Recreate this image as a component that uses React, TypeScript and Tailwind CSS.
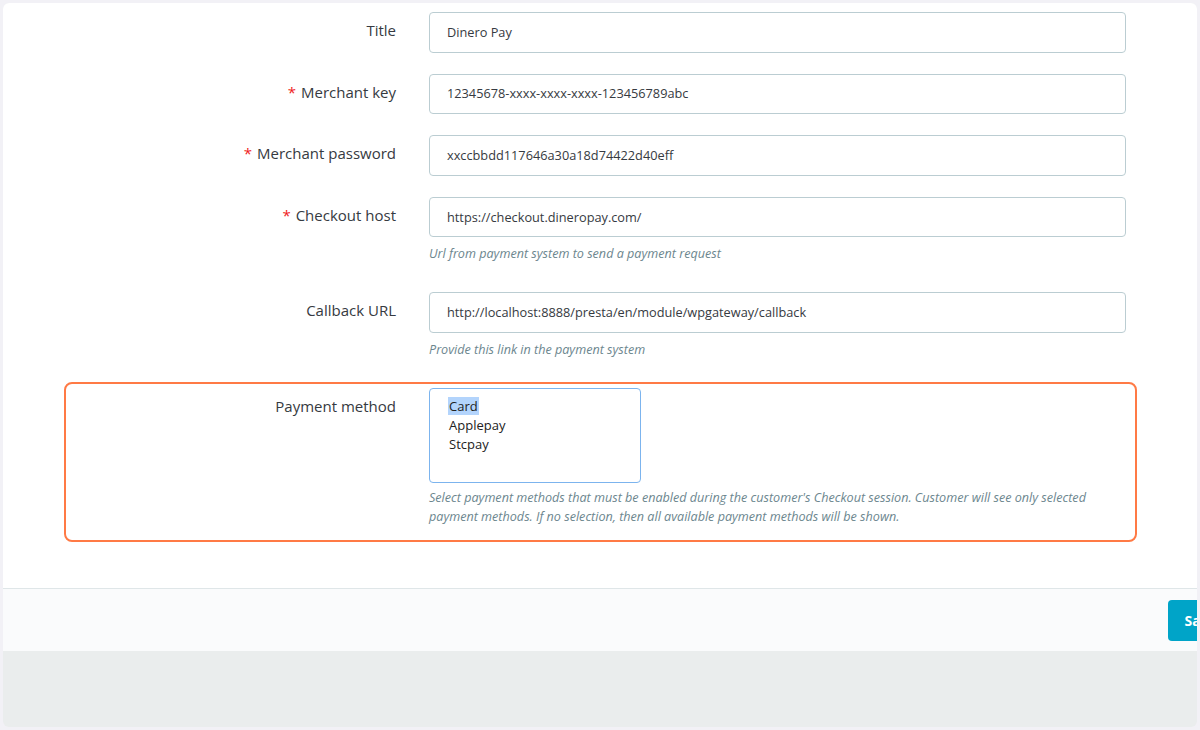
import React from "react";

interface Field {
  label: string;
  value: string;
  required?: boolean;
  help?: string;
}

const fields: Field[] = [
  { label: "Title", value: "Dinero Pay" },
  { label: "Merchant key", value: "12345678-xxxx-xxxx-xxxx-123456789abc", required: true },
  { label: "Merchant password", value: "xxccbbdd117646a30a18d74422d40eff", required: true },
  {
    label: "Checkout host",
    value: "https://checkout.dineropay.com/",
    required: true,
    help: "Url from payment system to send a payment request",
  },
  {
    label: "Callback URL",
    value: "http://localhost:8888/presta/en/module/wpgateway/callback",
    help: "Provide this link in the payment system",
  },
];

const methods = ["Card", "Applepay", "Stcpay"];

function FieldRow({ field }: { field: Field }) {
  return (
    <div className={`flex ${field.help ? "mb-[28px]" : "mb-[21px]"}`}>
      <label className="w-[393px] shrink-0 pt-[8px] text-right text-[15px] leading-[20px] text-[#363a41]">
        {field.required && <span className="mr-[5px] text-[#ef1c1c]">*</span>}
        {field.label}
      </label>
      <div className="ml-[33px] w-[697px]">
        <div className="flex h-[40.6px] items-center rounded-[4px] border border-[#bbcdd2] bg-white px-[17px] text-[12.75px] text-[#363a41]">
          {field.value}
        </div>
        {field.help && (
          <p className="mt-[7px] text-[12.6px] italic leading-[20px] text-[#6c868e]">{field.help}</p>
        )}
      </div>
    </div>
  );
}

export default function App() {
  const [selected, setSelected] = React.useState("Card");

  return (
    <div
      className="h-[730px] w-[1200px] bg-[#f2f1f6] p-[3px]"
      style={{ fontFamily: '"Open Sans", "Noto Sans", sans-serif' }}
    >
      <div className="flex h-full flex-col overflow-hidden rounded-[6px] bg-[#eaeded]">
        {/* form body */}
        <div className="h-[585px] shrink-0 bg-white pt-[9px]">
          {fields.map((f) => (
            <FieldRow key={f.label} field={f} />
          ))}

          {/* highlighted payment method row */}
          <div className="ml-[61px] mr-[60px] -mt-[6px] flex rounded-[8px] border-2 border-[#ff7a45] pb-[14px] pt-[4px]">
            <label className="w-[330px] shrink-0 pt-[8px] text-right text-[15px] leading-[20px] text-[#363a41]">
              Payment method
            </label>
            <div className="ml-[33px] w-[697px]">
              <div className="h-[95px] w-[212px] rounded-[4px] border border-[#7cb4ee] bg-white px-[18px] pt-[8px]">
                {methods.map((m) => (
                  <div
                    key={m}
                    onClick={() => setSelected(m)}
                    className="text-[13px] leading-[19px] text-[#222]"
                  >
                    <span className={m === selected ? "bg-[#b3d4fc] px-[1px]" : "px-[1px]"}>{m}</span>
                  </div>
                ))}
              </div>
              <p className="mt-[5px] text-[12.6px] italic leading-[19px] text-[#6c868e]">
                Select payment methods that must be enabled during the customer's Checkout session. Customer will
                see only selected payment methods. If no selection, then all available payment methods will be shown.
              </p>
            </div>
          </div>
        </div>

        {/* footer */}
        <div className="flex h-[63px] shrink-0 items-center justify-end border-t border-[#dfe6e8] bg-[#fafbfc]">
          <button className="-mr-[37px] h-[41px] rounded-[4px] bg-[#00a4c8] px-[17px] text-[14px] font-bold text-white">
            Save
          </button>
        </div>
      </div>
    </div>
  );
}
